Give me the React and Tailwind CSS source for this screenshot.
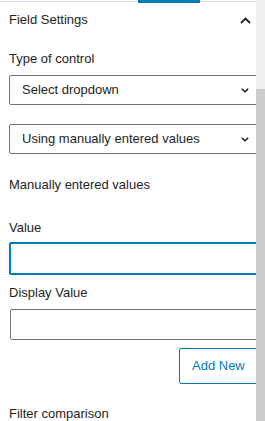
import React from "react";

function ChevronDown() {
  return (
    <svg width="8" height="5" viewBox="0 0 8 5" fill="none" className="shrink-0">
      <path d="M0.8 0.8 L4 3.8 L7.2 0.8" stroke="#1e1e1e" strokeWidth="1.5" />
    </svg>
  );
}

function ChevronUp() {
  return (
    <svg width="11" height="7" viewBox="0 0 11 7" fill="none" className="shrink-0">
      <path d="M1 6 L5.5 1.5 L10 6" stroke="#1e1e1e" strokeWidth="1.8" />
    </svg>
  );
}

function Select({ label }) {
  return (
    <div className="ml-[9px] w-[260px] h-[30px] border border-[#757575] rounded-[2px] flex items-center pl-[12px] pr-[19px] justify-between">
      <span className="text-[13px] text-[#1e1e1e]">{label}</span>
      <ChevronDown />
    </div>
  );
}

export default function App() {
  return (
    <div
      className="flex w-[265px] h-[421px] bg-white overflow-hidden"
      style={{ fontFamily: '"Liberation Sans", Arial, sans-serif' }}
    >
      <div className="relative w-[256px] h-[421px] overflow-hidden flex flex-col">
        <div className="relative h-[3px] shrink-0">
          <div className="mt-px h-px bg-[#dddddd]" />
          <div className="absolute top-0 left-[138px] w-[62px] h-[3px] bg-[#007cba]" />
        </div>
        <div className="h-[34px] shrink-0 flex items-center justify-between pl-[9px] pr-[5px]">
          <span className="text-[13px] text-[#1e1e1e]">Field Settings</span>
          <ChevronUp />
        </div>
        <div className="shrink-0 mt-[14px] h-[16px] leading-[16px] pl-[9px] text-[13px] text-[#1e1e1e]">
          Type of control
        </div>
        <div className="shrink-0 mt-[8px]">
          <Select label="Select dropdown" />
        </div>
        <div className="shrink-0 mt-[19px]">
          <Select label="Using manually entered values" />
        </div>
        <div className="shrink-0 mt-[23px] h-[16px] leading-[16px] pl-[9px] text-[13px] text-[#1e1e1e]">
          Manually entered values
        </div>
        <div className="shrink-0 mt-[27px] h-[16px] leading-[16px] pl-[9px] text-[13px] text-[#1e1e1e]">
          Value
        </div>
        <div className="mt-[6px] ml-[9px] w-[260px] h-[33px] border-2 border-[#007cba] rounded-[2px] shrink-0" />
        <div className="shrink-0 mt-[10px] h-[16px] leading-[16px] pl-[9px] text-[13px] text-[#1e1e1e]">
          Display Value
        </div>
        <div className="mt-[8px] ml-[10px] w-[260px] h-[31px] border border-[#757575] rounded-[2px] shrink-0" />
        <div className="mt-[8px] ml-[179px] w-[80px] h-[36px] border border-[#007cba] rounded-[2px] shrink-0 flex items-center pl-[12px] text-[13px] text-[#007cba]">
          Add New
        </div>
        <div className="shrink-0 mt-[22px] h-[16px] leading-[16px] pl-[9px] text-[13px] text-[#1e1e1e]">
          Filter comparison
        </div>
      </div>
      <div className="w-[9px] h-[421px] flex flex-col shrink-0">
        <div className="h-[89px] bg-[#f0f0f0]" />
        <div className="flex-1 bg-[#cdcdcd]" />
      </div>
    </div>
  );
}
